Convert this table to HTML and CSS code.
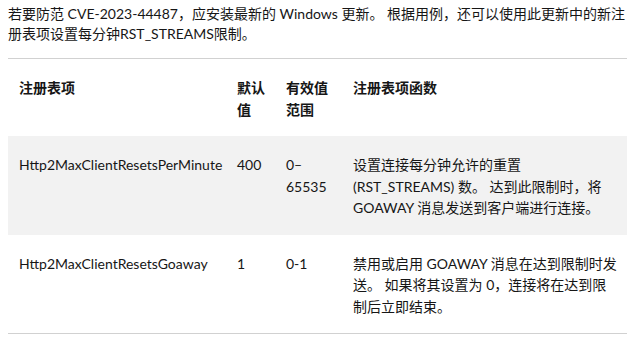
FILE: index.html
```html
<!DOCTYPE html>
<html lang="zh-CN">
<head>
<meta charset="utf-8">
<title>HTTP/2 RST_STREAMS</title>
<link rel="stylesheet" href="styles.css">
</head>
<body>
<main class="content">
  <p class="intro">若要防范 CVE-2023-44487，应安装最新的 Windows 更新。 根据用例，还可以使用此更新中的新注册表项设置每分钟RST_STREAMS限制。</p>
  <table class="reg-table">
    <thead>
      <tr>
        <th class="col-key">注册表项</th>
        <th class="col-default">默认值</th>
        <th class="col-range">有效值范围</th>
        <th class="col-desc">注册表项函数</th>
      </tr>
    </thead>
    <tbody>
      <tr class="row-alt">
        <td>Http2MaxClientResetsPerMinute</td>
        <td>400</td>
        <td>0–65535</td>
        <td>设置连接每分钟允许的重置 (RST_STREAMS) 数。 达到此限制时，将 GOAWAY 消息发送到客户端进行连接。</td>
      </tr>
      <tr>
        <td>Http2MaxClientResetsGoaway</td>
        <td>1</td>
        <td>0-1</td>
        <td>禁用或启用 GOAWAY 消息在达到限制时发送。 如果将其设置为 0，连接将在达到限制后立即结束。</td>
      </tr>
    </tbody>
  </table>
</main>
</body>
</html>
```

FILE: styles.css
```css
html, body {
  margin: 0;
  padding: 0;
  background: #ffffff;
}

body {
  font-family: "Lato", "Noto Sans CJK SC", sans-serif;
  font-size: 14px;
  color: #161616;
}

.content {
  padding: 0 0 0 8px;
}

.intro {
  margin: 4px 0 0 0;
  width: 624px;
  line-height: 19.5px;
}

.reg-table {
  margin-top: 15px;
  width: 619px;
  border-collapse: collapse;
  table-layout: fixed;
  border-top: 1px solid #d1d1d1;
  border-bottom: 1px solid #d1d1d1;
  line-height: 21.5px;
}

.reg-table th,
.reg-table td {
  box-sizing: border-box;
  text-align: left;
  vertical-align: top;
  padding: 18px 8px 16px 11px;
}

.reg-table th {
  font-weight: 700;
}

.col-key { width: 218px; }
.col-default { width: 49px; }
.col-range { width: 67px; }
.col-desc { width: 285px; }

.row-alt {
  background: #f2f2f2;
}
```
